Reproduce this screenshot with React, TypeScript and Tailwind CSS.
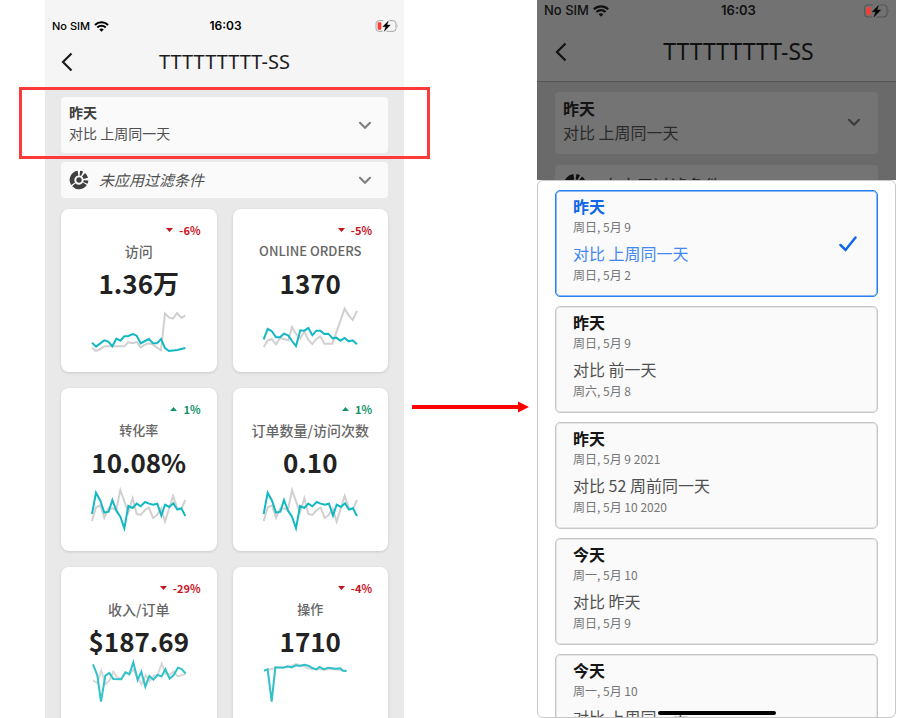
import React from 'react';

type Metric = {
  label: string;
  value: string;
  change: string;
  up?: boolean;
  compact?: boolean;
  viewBox: string;
  previous: string;
  current: string;
  faded?: boolean;
};

const conversionPrevious =
  '127,423 139,382 152,376 164,414 176,386 188,385 200,390 212,330 236,398 249,355 261,402 273,405 286,390 298,383 310,414 322,405 334,385 346,425 370,348 383,385 395,387 407,360';
const conversionCurrent =
  '127,402 139,338 152,362 164,398 177,395 188,360 200,392 212,410 224,445 236,378 249,384 261,371 273,379 286,366 298,371 310,374 323,371 335,407 346,374 359,381 371,370 383,389 395,385 407,408';

const metrics: Metric[] = [
  {
    label: '访问', value: '1.36万', change: '-6%', viewBox: '124 321 288 144',
    previous: '127,443 139,453 152,447 164,439 176,439 224,439 236,427 249,430 261,426 273,442 286,434 298,430 310,434 322,443 334,451 346,340 358,352 370,356 382,339 395,353 407,347',
    current: '127,428 139,440 152,430 164,421 176,425 188,439 200,416 212,422 224,409 236,408 250,402 261,407 273,430 286,423 298,417 310,430 322,430 334,417 346,444 358,453 383,450 407,444',
  },
  {
    label: 'ONLINE ORDERS', value: '1370', change: '-5%', compact: true, viewBox: '127 321 288 144',
    previous: '132,441 144,422 156,417 169,433 181,414 206,421 217,381 229,402 242,415 254,394 266,420 278,432 290,417 302,409 314,431 338,431 350,397 375,326 387,346 399,360 412,333',
    current: '132,418 144,387 156,393 169,412 181,412 193,401 206,407 217,423 229,438 242,391 254,392 266,384 278,406 290,392 302,392 314,402 326,401 339,415 350,413 362,422 375,414 387,424 399,421 412,433',
  },
  {
    label: '转化率', value: '10.08%', change: '1%', up: true, compact: true, viewBox: '124 318 288 144',
    previous: conversionPrevious, current: conversionCurrent,
  },
  {
    label: '订单数量/访问次数', value: '0.10', change: '1%', up: true, viewBox: '122 318 288 144',
    previous: conversionPrevious, current: conversionCurrent,
  },
  {
    label: '收入/订单', value: '$187.69', change: '-29%', viewBox: '124 330 288 144', faded: true,
    previous: '130,376 143,384 155,347 167,387 179,377 191,350 203,367 215,371 227,352 240,356 252,343 264,370 276,388 288,361 300,378 312,362 324,360 336,326 348,357 360,359 372,350 384,364 407,358',
    current: '130,328 143,361 154,440 167,362 179,354 191,372 215,373 227,352 239,358 251,322 264,375 275,350 287,395 299,363 311,374 324,360 336,364 347,343 360,371 372,360 385,338 396,342 408,356',
  },
  {
    label: '操作', value: '1710', change: '-4%', compact: true, viewBox: '127 330 288 144', faded: true,
    previous: '133,347 155,342 180,337 204,337 229,327 250,333 265,340 278,343 300,342 314,344 338,342 380,348',
    current: '133,347 144,343 156,440 167,337 190,338 204,334 216,337 229,331 240,333 254,329 266,332 278,339 290,343 300,336 312,343 326,338 348,341 362,340 370,347 381,348',
  },
];

const ranges = [
  { day: '昨天', date: '周日, 5月 9', compare: '对比 上周同一天', compareDate: '周日, 5月 2', selected: true },
  { day: '昨天', date: '周日, 5月 9', compare: '对比 前一天', compareDate: '周六, 5月 8' },
  { day: '昨天', date: '周日, 5月 9 2021', compare: '对比 52 周前同一天', compareDate: '周日, 5月 10 2020' },
  { day: '今天', date: '周一, 5月 10', compare: '对比 昨天', compareDate: '周日, 5月 9' },
  { day: '今天', date: '周一, 5月 10', compare: '对比 上周同一天', compareDate: '周一, 5月 3' },
];

function Wifi({ className }: { className: string }) {
  return (
    <svg viewBox="0 0 28 21" className={className} fill="none" stroke="currentColor" strokeWidth="3.8" aria-hidden="true">
      <path d="M1.5 7.5C8.5 .8 19.5 .8 26.500 7.500" />
      <path d="M6 12.300C10.500 8 17.500 8 22 12.300" />
      <path d="M9.800 16.200C12 14 16 14 18.200 16.200L14 20.500Z" fill="currentColor" stroke="none" />
    </svg>
  );
}

function Battery({ className, cell }: { className: string; cell: string }) {
  return (
    <svg viewBox="0 0 70 36" className={className} aria-hidden="true">
      <path d="M24 2H11Q2 2 2 11V25Q2 34 11 34H22M42 2H53Q62 2 62 11V25Q62 34 53 34H34" fill="none" stroke={cell} strokeWidth="3" />
      <path d="M65.500 13Q69 18 65.500 23Z" fill={cell} />
      <rect x="7" y="7" width="11" height="22" rx="3" fill="#ff3b30" />
      <path d="M39 3L22 20H31L27 34L45 15H35Z" fill="#000" stroke="#000" />
    </svg>
  );
}

function Back({ className }: { className: string }) {
  return (
    <svg viewBox="0 0 12 20" className={className} fill="none" stroke="currentColor" strokeWidth="2.200" aria-hidden="true">
      <path d="M10.500 1.500L2 10L10.500 18.500" />
    </svg>
  );
}

function Chevron({ className }: { className: string }) {
  return (
    <svg viewBox="0 0 14 9" className={className} fill="none" stroke="currentColor" strokeWidth="2.200" strokeLinecap="round" aria-hidden="true">
      <path d="M2 1.800L7 6.800L12 1.800" />
    </svg>
  );
}

function SegmentIcon({ className }: { className: string }) {
  return (
    <svg viewBox="0 0 60 60" className={className} fill="none" stroke="currentColor" strokeWidth="14" aria-hidden="true">
      <path d="M27 9.200A21 21 0 0 0 12.200 41.100" />
      <path d="M14.500 44.200A21 21 0 0 0 47.500 41.500" />
      <path d="M49.200 38.500A21 21 0 0 0 51 31" />
      <path d="M39.500 11.300A21 21 0 0 0 32.500 9.200" />
      <path d="M50.300 25A21 21 0 0 0 43.500 14" />
      <circle cx="30" cy="30" r="8" fill="currentColor" stroke="none" />
    </svg>
  );
}

function MetricCard({ metric }: { metric: Metric }) {
  return (
    <article className="flex h-[163px] flex-col items-center rounded-lg bg-white px-4 pt-[13px] shadow-[0_1px_3px_rgba(0,0,0,0.14)]">
      <p className={`flex items-center gap-1.5 self-end text-[11px] leading-4 font-bold ${metric.up ? 'text-[#12936a]' : 'text-[#c9131f]'}`}>
        <svg viewBox="0 0 7 4" className={`h-1 w-[7px] ${metric.up ? 'rotate-180' : ''}`} fill="currentColor" aria-hidden="true">
          <path d="M0 0H7L3.500 4Z" />
        </svg>
        {metric.change}
      </p>
      <h3 className={`mt-[3px] leading-5 font-medium whitespace-nowrap text-[#666] ${metric.compact ? 'text-[13px]' : 'text-sm'}`}>{metric.label}</h3>
      <p className="mt-1 text-[26px] leading-9 font-bold text-[#222]">{metric.value}</p>
      <svg
        viewBox={metric.viewBox}
        className="mt-1.5 h-12 w-24 shrink-0 overflow-visible"
        fill="none"
        strokeWidth="6"
        role="img"
        aria-label={metric.label}
      >
        <polyline points={metric.previous} stroke={metric.faded ? '#d8d8d8' : '#d0d0d0'} />
        <polyline points={metric.current} stroke={metric.faded ? '#30c1c9' : '#14b8c2'} />
      </svg>
    </article>
  );
}

function Dashboard() {
  return (
    <section className="flex min-w-0 flex-col bg-[#e9e9e9]">
      <header className="bg-[#f5f5f5] pt-4 text-[#1c1c1c]">
        <div className="grid h-5 grid-cols-[1fr_auto_1fr] items-center pr-[5px] pl-[7px] font-['Inter',sans-serif] text-xs text-black">
          <span className="flex items-center gap-1 text-[11px] font-medium">
            No SIM <Wifi className="h-[11px] w-[15px]" />
          </span>
          <time className="font-semibold">16:03</time>
          <Battery className="h-3 w-6 justify-self-end" cell="#a5a5a5" />
        </div>
        <div className="grid h-[51px] grid-cols-[16px_1fr_16px] items-center px-4">
          <button type="button" aria-label="返回"><Back className="h-5 w-3" /></button>
          <h1 className="text-center font-['Noto_Sans',sans-serif] text-xl">TTTTTTTTT-SS</h1>
        </div>
      </header>
      <main className="flex flex-col px-4 pt-2.5">
        <div className="relative">
          <button type="button" className="flex h-14 w-full items-center justify-between rounded bg-[#fafafa] pr-4 pb-1 pl-2 text-left text-sm leading-[21px] text-[#505050]">
            <span>
              <strong className="block text-[#3c3c3c]">昨天</strong>
              对比 上周同一天
            </span>
            <Chevron className="mt-1 h-[9px] w-3.5 text-[#808080]" />
          </button>
          <div className="pointer-events-none absolute -inset-x-[42px] -top-2.5 -bottom-1.5 border-[3px] border-[#fd3a3a]" />
        </div>
        <button type="button" className="mt-[9px] flex h-9 items-center rounded bg-[#fafafa] pr-4 pl-2 text-left text-[15px] text-[#505050] italic">
          <SegmentIcon className="mr-2.5 size-5 text-[#404040]" />
          <span className="flex-1">未应用过滤条件</span>
          <Chevron className="h-[9px] w-3.5 text-[#808080]" />
        </button>
        <div className="mt-[11px] grid grid-cols-2 gap-4">
          {metrics.map((metric) => <MetricCard key={metric.label} metric={metric} />)}
        </div>
      </main>
    </section>
  );
}

function RangePicker() {
  return (
    <section className="relative flex min-w-0 flex-col overflow-hidden">
      <div className="h-[180px] shrink-0 overflow-hidden bg-[#6a6a6a] text-[#111]">
        <header className="border-b border-[#555] bg-[#727272]">
          <div className="flex h-[22px] items-center pr-1.5 pl-[7px] font-['Inter',sans-serif] text-[13px]">
            <span className="flex items-center gap-1 font-medium">
              No SIM <Wifi className="h-3 w-4" />
            </span>
            <time className="flex-1 pl-1 text-center font-semibold">16:03</time>
            <Battery className="h-3.5 w-[26px]" cell="#555" />
          </div>
          <div className="grid h-[59px] grid-cols-[16px_1fr] items-center px-[18px]">
            <button type="button" aria-label="返回"><Back className="h-5 w-3" /></button>
            <h2 className="pl-7 text-center font-['Noto_Sans',sans-serif] text-[23px]">TTTTTTTTT-SS</h2>
          </div>
        </header>
        <div className="flex flex-col gap-[11px] px-[18px] pt-2.5">
          <button type="button" className="flex h-[62px] items-center justify-between rounded bg-[#747474] pr-[17px] pb-1.5 pl-2 text-left text-base leading-6 text-[#2a2a2a]">
            <span>
              <strong className="block text-[#141414]">昨天</strong>
              对比 上周同一天
            </span>
            <Chevron className="mt-1 h-[9px] w-3.5 text-[#3c3c3c]" />
          </button>
          <button type="button" className="flex h-10 items-center rounded bg-[#747474] pl-2 text-left text-[17px] text-[#222] italic">
            <SegmentIcon className="mr-3 size-6 text-[#111]" />
            未应用过滤条件
          </button>
        </div>
      </div>
      <div className="flex min-h-0 flex-1 flex-col gap-[9px] overflow-hidden rounded-md border border-[#c8c8c8] bg-white px-[17px] pt-[9px]">
        {ranges.map((range, index) => (
          <button
            key={index}
            type="button"
            aria-pressed={Boolean(range.selected)}
            className={`flex h-[107px] shrink-0 items-center justify-between rounded-[5px] border bg-[#fafafa] pr-5 pb-[7px] pl-[17px] text-left ${range.selected ? 'border-[#2680eb] shadow-[0_0_0_1px_#8ab8f5_inset]' : 'border-[#c8c8c8] shadow-[0_0_0_1px_#e4e4e4_inset]'}`}
          >
            <span className="flex flex-col">
              <strong className={`text-base leading-[22px] ${range.selected ? 'text-[#1068e8]' : 'text-[#151515]'}`}>{range.day}</strong>
              <span className="text-xs leading-5 text-[#757575]">{range.date}</span>
              <span className={`mt-1 text-base leading-6 ${range.selected ? 'text-[#4288f0]' : 'text-[#505050]'}`}>{range.compare}</span>
              <span className="text-xs leading-5 text-[#757575]">{range.compareDate}</span>
            </span>
            {range.selected && (
              <svg viewBox="0 0 18 16" className="mt-2 h-4 w-[18px] text-[#1068e8]" fill="none" stroke="currentColor" strokeWidth="2.500" strokeLinecap="round" aria-hidden="true">
                <path d="M1.500 9L6.500 14L16.500 1.500" />
              </svg>
            )}
          </button>
        ))}
      </div>
      <div className="absolute bottom-[3px] left-1/2 h-1 w-[118px] -translate-x-1/2 rounded-full bg-black" />
    </section>
  );
}

export default function App() {
  return (
    <div className="grid h-screen grid-cols-[359fr_133fr_359fr] grid-rows-[100%] overflow-hidden bg-white pr-[22px] pl-[45px] font-['Noto_Sans_CJK_SC',sans-serif]">
      <Dashboard />
      <div className="flex items-center px-2 pt-24">
        <svg viewBox="0 0 117 12" className="h-3 w-full" fill="#f00" aria-hidden="true">
          <rect y="4" width="108" height="4" />
          <path d="M106 .5L117 6L106 11.500Z" />
        </svg>
      </div>
      <RangePicker />
    </div>
  );
}
